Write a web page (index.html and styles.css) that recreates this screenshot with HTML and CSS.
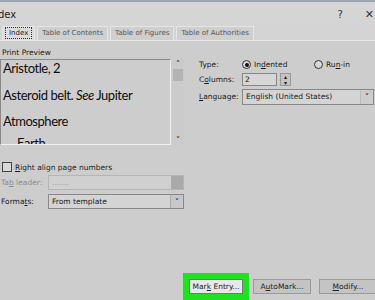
FILE: index.html
```html
<!DOCTYPE html>
<html>
<head>
<meta charset="utf-8">
<link rel="stylesheet" href="styles.css">
</head>
<body>
<div class="dialog">
  <div class="titlebar">
    <span class="title">dex</span>
    <span class="tb-btns"><span class="help">?</span><span class="close">✕</span></span>
  </div>
  <div class="tabs">
    <span class="tab active"><span class="focus">Index</span></span>
    <span class="tab">Table of Contents</span>
    <span class="tab">Table of Figures</span>
    <span class="tab">Table of Authorities</span>
  </div>
  <div class="main">
    <div class="left">
      <div class="label">Print Preview</div>
      <div class="preview">
        <div class="pv-text">
          <div class="pv-line">Aristotle, 2</div>
          <div class="pv-line">Asteroid belt. <i>See</i> Jupiter</div>
          <div class="pv-line">Atmosphere</div>
          <div class="pv-line sub">Earth</div>
        </div>
        <div class="scroll">
          <span class="arr">&#x2C4;</span>
          <span class="thumb"></span>
          <span class="track"></span>
          <span class="arr">&#x2C5;</span>
        </div>
      </div>
      <div class="check-row"><span class="checkbox"></span><span><u>R</u>ight align page numbers</span></div>
      <div class="field-row disabled"><span class="flabel">Ta<u>b</u> leader:</span><span class="combo dis"><span class="val">.......</span><span class="dd"></span></span></div>
      <div class="field-row"><span class="flabel">Forma<u>t</u>s:</span><span class="combo"><span class="val">From template</span><span class="dd">&#x2C5;</span></span></div>
    </div>
    <div class="right">
      <div class="rrow">
        <span class="rlabel">Type:</span>
        <span class="radio on"></span><span class="rtext">In<u>d</u>ented</span>
        <span class="radio"></span><span class="rtext">Ru<u>n</u>-in</span>
      </div>
      <div class="rrow">
        <span class="rlabel">C<u>o</u>lumns:</span>
        <span class="numbox">2</span>
        <span class="spin"><span>&#x25B4;</span><span>&#x25BE;</span></span>
      </div>
      <div class="rrow lrow">
        <span class="rlabel"><u>L</u>anguage:</span>
        <span class="combo lang"><span class="val">English (United States)</span><span class="dd">&#x2C5;</span></span>
      </div>
    </div>
  </div>
  <div class="buttons">
    <span class="btn mark">Mar<u>k</u> Entry...</span>
    <span class="btn">A<u>u</u>toMark...</span>
    <span class="btn"><u>M</u>odify...</span>
  </div>
</div>
</body>
</html>
```
FILE: styles.css
```css
html, body { margin: 0; padding: 0; }
body { width: 375px; height: 300px; overflow: hidden; background: #cdcdcd; font-family: "DejaVu Sans", Verdana, sans-serif; font-size: 8px; color: #1a1a1a; }
.dialog { width: 375px; height: 300px; display: flex; flex-direction: column; }
.titlebar { height: 24px; border-top: 2px solid #9aa7b5; background: #d5d5d5; display: flex; align-items: center; justify-content: space-between; }
.title { font-size: 10px; margin-left: -2px; color: #222; }
.tb-btns { display: flex; gap: 22px; align-items: center; margin-right: 1px; font-size: 10px; color: #333; }
.close { font-size: 11px; }
.tabs { height: 14px; display: flex; align-items: flex-end; gap: 2px; padding-left: 2px; background: #d4d4d4; border-bottom: 1px solid #e8e8e8; }
.tab { height: 13px; line-height: 13px; padding: 0 4px; color: #555; font-size: 7px; background: #cfcfcf; border: 1px solid #e5e5e5; border-bottom: none; }
.tab.active { background: #dcdcdc; color: #222; padding: 0 2px; }
.focus { border: 1px dotted #333; padding: 0 3px; line-height: 10px; display: inline-block; }
.main { display: flex; padding-top: 6px; }
.left { width: 185px; display: flex; flex-direction: column; }
.label { font-size: 7.5px; padding-left: 2px; height: 11px; line-height: 11px; }
.preview { display: flex; height: 86px; margin-top: 1px; }
.pv-text { width: 171px; border: 1px solid #8a8a8a; border-right-color: #f0f0f0; border-bottom-color: #f0f0f0; overflow: hidden; font-family: Lato, "Open Sans", sans-serif; font-size: 13px; letter-spacing: -0.45px; color: #0d0d0d; padding-left: 2px; box-sizing: border-box; }
.pv-line { height: 26.5px; line-height: 17px; }
.pv-line.sub { padding-left: 14px; margin-top: -5px; }
.scroll { width: 12px; display: flex; flex-direction: column; align-items: center; background: #cbcbcb; margin-left: 1px; }
.arr { height: 10px; line-height: 10px; font-size: 9px; color: #222; }
.thumb { width: 10px; height: 12px; background: #b3b3b3; }
.track { flex: 1; }
.check-row { display: flex; align-items: center; gap: 3px; margin-top: 16px; padding-left: 2px; font-size: 7.5px; height: 12px; }
.checkbox { width: 8px; height: 8px; border: 1px solid #444; background: #d8d8d8; }
.field-row { display: flex; align-items: center; height: 17px; margin-top: 2px; font-size: 7.5px; }
.field-row.disabled { margin-top: 1px; }
.flabel { width: 48px; padding-left: 1px; box-sizing: border-box; }
.disabled .flabel { color: #8c8c8c; }
.combo { flex: 1; height: 15px; display: flex; border: 1px solid #888; background: #d4d4d4; box-sizing: border-box; align-items: center; }
.combo .val { flex: 1; padding-left: 3px; }
.combo .dd { width: 12px; height: 100%; background: #c8c8c8; display: flex; align-items: center; justify-content: center; border-left: 1px solid #aaa; font-size: 9px; }
.combo.dis { border-color: #b5b5b5; background: #d0d0d0; color: #999; }
.combo.dis .dd { background: #a9a9a9; border-left: none; }
.right { flex: 1; padding-left: 15px; padding-top: 10px; display: flex; flex-direction: column; gap: 0; }
.rrow { display: flex; align-items: center; height: 15px; font-size: 7.5px; }
.rrow.lrow { height: 17px; margin-top: 1px; }
.rlabel { width: 43px; }
.radio { width: 9px; height: 9px; border: 1px solid #333; border-radius: 50%; box-sizing: border-box; background: #d8d8d8; margin-right: 3px; position: relative; }
.radio.on::after { content: ""; position: absolute; left: 1.5px; top: 1.5px; width: 4px; height: 4px; border-radius: 50%; background: #111; }
.rtext { width: 60px; }
.numbox { width: 35px; height: 13px; border: 1px solid #888; background: #d6d6d6; box-sizing: border-box; padding-left: 2px; line-height: 11px; }
.spin { width: 11px; height: 13px; margin-left: 3px; display: flex; flex-direction: column; background: #c4c4c4; border: 1px solid #999; box-sizing: border-box; font-size: 6px; line-height: 5.5px; align-items: center; }
.combo.lang { flex: none; width: 132px; height: 16px; }
.combo.lang .dd { border-left: 1px solid #bbb; background: #cdcdcd; }
.buttons { margin-top: auto; display: flex; justify-content: flex-end; gap: 8px; padding-bottom: 6px; margin-right: -2px; }
.btn { width: 58px; height: 15px; line-height: 14px; box-sizing: border-box; border: 1px solid #9a9a9a; background: #c4c4c4; text-align: center; font-size: 7.5px; color: #222; }
.btn.mark { background: #e8e8e8; border: 1px solid #777; width: 54px; outline: 6px solid #1fe21f; outline-offset: 0; margin-right: 2px; box-shadow: 0 0 0 1px #1fe21f; }
```
